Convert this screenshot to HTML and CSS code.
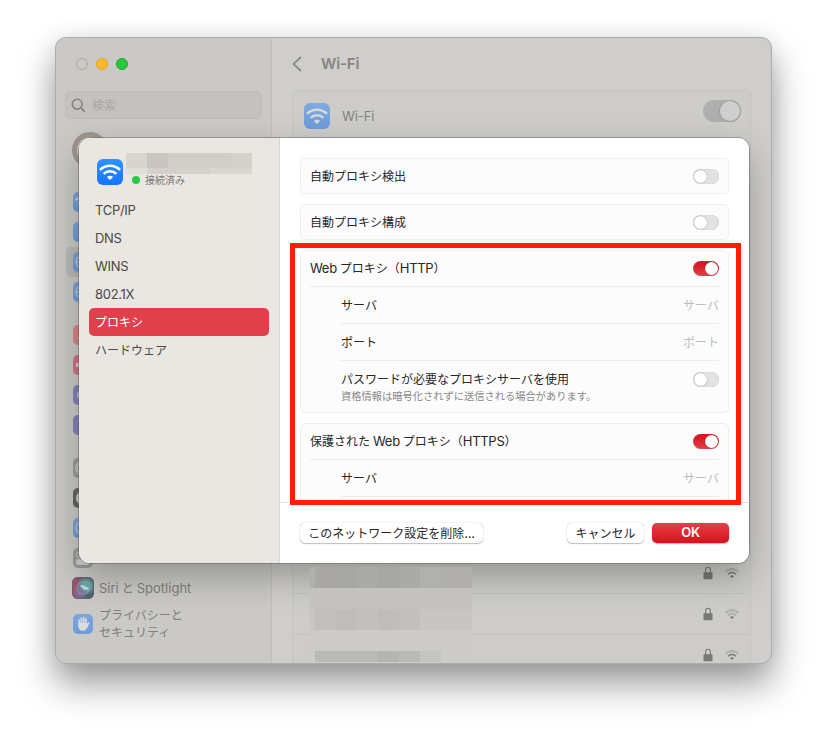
FILE: index.html
```html
<!DOCTYPE html>
<html lang="ja">
<head>
<meta charset="utf-8">
<title>Wi-Fi</title>
<link rel="stylesheet" href="styles.css">
</head>
<body>
<svg class="defs" width="0" height="0">
  <defs>
    <symbol id="wifi" viewBox="0 0 26 26">
      <g fill="none" stroke="currentColor" stroke-width="2.5" stroke-linecap="butt">
        <path d="M2.9 10.9a14.3 14.3 0 0 1 20.2 0"/>
        <path d="M6.7 14.9a8.9 8.9 0 0 1 12.6 0"/>
      </g>
      <path fill="currentColor" d="M13 21l-3.1-2.9a4.4 4.4 0 0 1 6.2 0z"/>
    </symbol>
    <symbol id="lock" viewBox="0 0 10 14">
      <path d="M2.6 7V4a2.4 2.7 0 0 1 4.8 0v3" fill="none" stroke="currentColor" stroke-width="1.1"/>
      <rect x=".5" y="6.3" width="9" height="7" rx="1" fill="currentColor"/>
    </symbol>
    <symbol id="globe" viewBox="0 0 20 20">
      <g fill="none" stroke="currentColor" stroke-width="1"><circle cx="10" cy="10" r="7"/><ellipse cx="10" cy="10" rx="3.3" ry="7"/><path d="M3 10h14M4.4 6.2h11.2M4.4 13.8h11.2"/></g>
    </symbol>
  </defs>
</svg>
<div class="window">
  <aside class="sidebar">
    <div class="lights"><i></i><i class="yellow"></i><i class="green"></i></div>
    <div class="search">
      <svg width="15" height="15" viewBox="0 0 15 15"><g fill="none" stroke="#858381" stroke-width="1.6" stroke-linecap="round"><circle cx="6.2" cy="6.2" r="4.9"/><path d="M9.8 9.8l3.5 3.3"/></g></svg>
      <span>検索</span>
    </div>
    <div class="avatar"></div>
    <div class="group">
      <div class="item"><b class="icon blue"><svg viewBox="0 0 26 26"><use href="#wifi"/></svg></b></div>
      <div class="item"><b class="icon blue"><svg viewBox="0 0 20 20"><path d="M6 7l8 6-4 4V3l4 4-8 6" fill="none" stroke="currentColor"/></svg></b></div>
      <div class="item current"><b class="icon blue"><svg><use href="#globe"/></svg></b></div>
      <div class="item"><b class="icon blue"><svg><use href="#globe"/></svg></b></div>
    </div>
    <div class="group">
      <div class="item"><b class="icon red"><svg viewBox="0 0 20 20"><path d="M4 14q3-3 3-7h6q0 4 3 7z" fill="currentColor"/></svg></b></div>
      <div class="item"><b class="icon pink"><svg viewBox="0 0 20 20"><path d="M3 8h5l5-4v12l-5-4H3z" fill="currentColor"/></svg></b></div>
      <div class="item"><b class="icon purple"><svg viewBox="0 0 20 20"><circle cx="10" cy="10" r="6" fill="currentColor"/></svg></b></div>
      <div class="item"><b class="icon purple"><svg viewBox="0 0 20 20"><path d="M6 4h8v2l-4 4 4 4v2H6v-2l4-4-4-4z" fill="none" stroke="#a3a1c4"/></svg></b></div>
    </div>
    <div class="group">
      <div class="item"><b class="icon gray"><svg viewBox="0 0 20 20"><g fill="none" stroke="currentColor"><circle cx="10" cy="10" r="7" stroke-width="2" stroke-dasharray="1.2 1"/><circle cx="10" cy="10" r="5.7"/></g></svg></b></div>
      <div class="item"><b class="icon dark"><svg viewBox="0 0 20 20"><circle cx="10" cy="10" r="7" fill="currentColor"/></svg></b></div>
      <div class="item"><b class="icon blue"><svg viewBox="0 0 20 20"><circle cx="10" cy="10" r="7" fill="none" stroke="currentColor" stroke-width="1.2"/></svg></b></div>
      <div class="item"><b class="icon gray"><svg viewBox="0 0 20 20"><g fill="none" stroke="currentColor"><rect x="3.5" y="4" width="13" height="5" rx="2.5"/></g><rect x="3" y="11" width="14" height="6" rx="3" fill="currentColor"/></svg></b></div>
      <div class="item"><b class="icon siri"><svg viewBox="0 0 22 22"><circle cx="11" cy="11" r="6.8" fill="none" stroke="#8fb0b4" stroke-width="1" opacity=".7"/><path d="M7.5 9q4-2 6.200.5 3.500.5 3.500 3.500-3.500-.5-5.200 0-1.500-3-4.500-4z" fill="#d5e2e5" opacity=".9"/></svg></b><span class="mixed"><em>Siri</em><span class="gap">と</span><em>Spotlight</em></span></div>
      <div class="item tall"><b class="icon blue"><svg viewBox="0 0 20 20"><g fill="none" stroke="#dbdcdc" stroke-width="1.7" stroke-linecap="round"><path d="M6.2 6v6M8.4 4.2V11M10.7 3.7V11M13 5v7"/><path d="M15.5 9.2l-2 4"/></g><path d="M5.4 9h8.4l.9 2.5q-1.3 5.3-4.7 5.3-4.6 0-4.6-5z" fill="#dbdcdc"/></svg></b><span>プライバシーと<br>セキュリティ</span></div>
    </div>
    <div class="group last"><div class="item"><b class="icon dark"></b></div></div>
  </aside>
  <main class="pane">
    <header class="title"><svg width="10" height="16" viewBox="0 0 10 16"><path d="M8.5 1.5L1.5 8l7 6.5" fill="none" stroke="#8b8b89" stroke-width="1.8" stroke-linecap="round" stroke-linejoin="round"/></svg><h1>Wi-Fi</h1></header>
    <section class="panel">
      <div class="panel-head"><b class="wifi-tile dim"><svg><use href="#wifi"/></svg></b><span>Wi-Fi</span><i class="big-switch"></i></div>
      <div class="net"><svg class="lock"><use href="#lock"/></svg><svg class="bars" viewBox="0 0 26 26"><use href="#wifi"/><path class="faint" d="M2.9 10.9a14.3 14.3 0 0 1 20.2 0"/></svg></div>
      <div class="net"><svg class="lock"><use href="#lock"/></svg><svg class="bars" viewBox="0 0 26 26"><use href="#wifi"/><path class="faint" d="M2.9 10.9a14.3 14.3 0 0 1 20.2 0M6.7 14.9a8.9 8.9 0 0 1 12.6 0"/></svg></div>
      <div class="net"><svg class="lock"><use href="#lock"/></svg><svg class="bars" viewBox="0 0 26 26"><use href="#wifi"/><path class="faint" d="M2.9 10.9a14.3 14.3 0 0 1 20.2 0"/></svg></div>
    </section>
  </main>
  <div class="modal-shade"></div>
  <svg class="mosaic" width="162" height="95" shape-rendering="crispEdges">
    <path fill="#b0b0ae" d="M0 0h162v21H0z"/><path fill="#a9a8a4" d="M5 0h21v21H5z"/><path fill="#a7a7a6" d="M26 0h21v21H26zM68 0h21v21H68z"/><path fill="#aaaaa9" d="M47 0h21v21H47zM89 0h21v21H89z"/><path fill="#b0afab" d="M131 0h31v21h-31z"/>
    <path fill="#c3c2be" d="M0 21h162v21H0z"/><path fill="#c7c6c3" d="M0 42h162v21H0z"/><path fill="#c1c0bc" d="M5 42h105v21H5z"/><path fill="#bebdbb" d="M26 42h21v21H26zM68 42h21v21H68z"/>
    <path fill="#cccbc8" d="M0 63h162v21H0z"/><path fill="#b9b9b7" d="M5 84h105v11H5z"/><path fill="#b4b4b2" d="M68 84h21v11H68z"/><path fill="#c4c4c3" d="M110 84h21v11h-21z"/>
  </svg>
</div>

<div class="modal">
  <nav class="tabs">
    <div class="network">
      <b class="wifi-tile"><svg><use href="#wifi"/></svg></b>
      <div class="network-info">
        <svg width="126" height="21" shape-rendering="crispEdges"><path fill="#d1cdc9" d="M0 0h126v15H0z"/><path fill="#d8d4d0" d="M0 0h21v15H0z"/><path fill="#cbc5c2" d="M21 0h21v15H21z"/><path fill="#d4d0cb" d="M105 0h21v15h-21z"/><path fill="#e1ddd8" d="M0 15h126v6H0z"/><path fill="#d4d0cc" d="M21 15h63v6H21z"/><path fill="#d9d5d0" d="M84 15h42v6H84z"/></svg>
        <p><i></i>接続済み</p>
      </div>
    </div>
    <a class="latin">TCP/IP</a>
    <a class="latin">DNS</a>
    <a class="latin">WINS</a>
    <a class="latin">802.1X</a>
    <a class="active">プロキシ</a>
    <a>ハードウェア</a>
  </nav>
  <div class="content">
    <div class="scroll">
      <section class="card"><div class="row"><span>自動プロキシ検出</span><i class="switch"></i></div></section>
      <section class="card"><div class="row"><span>自動プロキシ構成</span><i class="switch"></i></div></section>
      <section class="card">
        <div class="row"><span class="mixed"><em>Web</em><span class="gap">プロキシ（</span><em>HTTP</em>）</span><i class="switch on"></i></div>
        <div class="row sub top"><span>サーバ</span><u>サーバ</u></div>
        <div class="row sub"><span>ポート</span><u>ポート</u></div>
        <div class="row sub note"><span>パスワードが必要なプロキシサーバを使用<small>資格情報は暗号化されずに送信される場合があります。</small></span><i class="switch"></i></div>
      </section>
      <section class="card">
        <div class="row"><span class="mixed">保護された<em class="gap">Web</em>プロキシ（<em>HTTPS</em>）</span><i class="switch on"></i></div>
        <div class="row sub top"><span>サーバ</span><u>サーバ</u></div>
        <div class="row sub"></div>
      </section>
    </div>
    <footer><button class="remove">このネットワーク設定を削除<em>...</em></button><button class="cancel">キャンセル</button><button class="ok">OK</button></footer>
  </div>
</div>
<div class="highlight"></div>
</body>
</html>
```

FILE: styles.css
```css
* { box-sizing: border-box; }
body {
  margin: 0;
  width: 827px;
  height: 737px;
  overflow: hidden;
  position: relative;
  background: #fff;
  font: 12px/16px "Noto Sans CJK JP", Inter, sans-serif;
  text-autospace: no-autospace;
  color: #272727;
}
em, .latin { font: 13px/16px Inter, sans-serif; letter-spacing: -.3px; }
svg { display: block; flex: none; }
.defs { position: absolute; }

.window {
  position: relative;
  width: 717px;
  height: 627px;
  margin: 37px 0 0 55px;
  border: 1px solid #acacaa;
  border-radius: 11px;
  overflow: hidden;
  display: grid;
  grid-template-columns: 216px 1fr;
  background: #cfcecc;
  box-shadow: 0 20px 36px rgba(0, 0, 0, .4), 0 0 22px rgba(0, 0, 0, .07);
}
.sidebar {
  height: 625px;
  overflow: hidden;
  background: #cac9c5;
  border-right: 1px solid #bfbebb;
  padding: 20px 9px 0;
  color: #7f7e7c;
}
.lights { display: flex; gap: 8px; padding-left: 11px; height: 12px; }
.lights i { width: 12px; height: 12px; border-radius: 50%; background: #cbc8c3; border: 1px solid #aaa7a3; }
.lights .yellow { background: #ffb92c; border-color: #e7a01c; }
.lights .green { background: #27c83f; border-color: #18ab2b; }
.search {
  display: flex;
  align-items: center;
  gap: 6px;
  height: 28px;
  width: 197px;
  margin-top: 21px;
  padding-left: 5px;
  border: 1px solid #bfbcba;
  border-radius: 6px;
  background: #c5c1bf;
  color: #aaa7a5;
}
.avatar { width: 36px; height: 36px; margin: 13px 0 19px 7px; border-radius: 50%; background: #cecdca; border: 5px solid #9e958d; }
.group { margin-bottom: 13px; }
.item { display: flex; align-items: center; gap: 6px; height: 30px; padding-left: 8px; border-radius: 5px; white-space: nowrap; }
.item.current { background: #bbb9b7; margin-left: 1px; padding-left: 7px; }
.item.tall { height: 42px; line-height: 17px; }
.item.tall span { margin-top: -2px; }
.item em { color: #7f7e7c; letter-spacing: 0; }
.icon { width: 20px; height: 20px; border-radius: 5px; flex: none; color: #d0d0cf; background: #999; overflow: hidden; }
.icon svg { width: 20px; height: 20px; }
.icon.blue { background: linear-gradient(#7da6d9, #6e9bda); }
.icon.red { background: #dc8383; }
.icon.pink { background: #d77189; }
.icon.purple { background: #8582bd; }
.icon.gray { background: #9c9c9c; }
.icon.dark { background: #666665; }
.icon.siri {
  width: 22px;
  height: 22px;
  margin: 0 -1px;
  border: 1px solid #666673;
  background: radial-gradient(circle at 35% 75%, #8376a8, transparent 40%), radial-gradient(circle at 65% 40%, #6aa9a9 0 25%, transparent 55%), linear-gradient(100deg, #b0506e, #52606e 80%);
}
.group.last .icon { margin-top: 1px; }

.pane { padding: 17px 20px 0; height: 625px; overflow: hidden; color: #82817f; }
.title { display: flex; align-items: center; height: 18px; gap: 19px; }
h1 { font: 600 15px/18px Inter, sans-serif; margin: 0; color: #858583; letter-spacing: -.15px; }
.panel { margin-top: 17px; width: 459px; height: 600px; border: 1px solid #c5c4c1; border-radius: 6px; background: #cdccc8; }
.panel-head { display: flex; height: 462px; align-items: flex-start; padding: 12px 10px 0 11px; }
.panel-head span { font: 13px/16px Inter, sans-serif; margin: 5px 0 0 12px; letter-spacing: -.1px; }
.wifi-tile { width: 26px; height: 26px; border-radius: 6px; background: linear-gradient(#2e92ff, #1675fb); color: #fff; flex: none; }
.wifi-tile.dim { background: linear-gradient(#7eabdf, #6d9bdb); color: #d6d8d8; }
.wifi-tile svg { width: 26px; height: 26px; }
.big-switch { width: 38px; height: 22px; margin: -3px -1px 0 auto; border-radius: 11px; background: #afafaf; padding: 1px; }
.big-switch::after { content: ""; display: block; width: 20px; height: 20px; margin-left: auto; border-radius: 50%; background: #cfcfcf; box-shadow: 0 0 1px 1px #a0a0a0; }
.net { height: 41px; border-bottom: 1px solid #c2c1bd; display: flex; justify-content: flex-end; align-items: center; gap: 11px; padding-right: 10px; color: #777775; }
.lock { width: 10px; height: 14px; }
.bars { width: 16px; height: 16px; }
.faint { fill: none; stroke: #b7b6b3; stroke-width: 2.7; }
.modal-shade { position: absolute; left: 23px; top: 100px; width: 670px; height: 425px; border-radius: 11px; outline: 1px solid rgba(90, 90, 90, .45); box-shadow: 0 14px 34px rgba(0, 0, 0, .27); }
.mosaic { position: absolute; left: 254px; top: 529px; }

.modal {
  position: absolute;
  left: 79px;
  top: 138px;
  width: 670px;
  height: 425px;
  border-radius: 11px;
  overflow: hidden;
  display: grid;
  grid-template-columns: 201px 1fr;
  background: #fff;
}
.tabs { background: #eae7e2; border-right: 1px solid #d9d7d4; padding: 15px 10px; color: #494846; }
.network { display: flex; height: 43px; padding: 6px 0 0 8px; gap: 3px; }
.network-info { margin-top: -6px; }
.network p { display: flex; align-items: center; margin: 0; padding-left: 6px; height: 12px; font-size: 10px; color: #7b7976; }
.network p i { width: 8px; height: 8px; margin-right: 5px; border-radius: 50%; background: #28cb41; }
.tabs a { display: flex; align-items: center; height: 28px; padding-left: 6px; border-radius: 5px; }
.tabs .active { background: #e0404c; color: #fff; }
.content { display: flex; flex-direction: column; height: 425px; }
.scroll { height: 365px; overflow: hidden; padding: 20px 20px 0; border-bottom: 1px solid #e1e1e1; }
.card { border: 1px solid #eee; border-radius: 5px; background: #fcfcfc; margin-bottom: 10px; padding: 0 9px; }
.row { display: flex; justify-content: space-between; align-items: center; height: 34px; white-space: nowrap; }
.row > span { display: block; }
.row:not(:only-child):first-child { height: 35px; }
.row > .mixed { margin-top: -1px; }
.mixed .gap { margin: 0 3px; }
.row .mixed > span.gap { margin-right: 0; }
.row.sub { height: 37px; margin-left: 31px; border-top: 1px solid #ececec; }
.row.sub.top { margin-left: 0; padding-left: 31px; }
.row.note { height: 52px; align-items: flex-start; padding-top: 10px; }
.row.note .switch { margin-top: 1px; }
small { display: block; font-size: 10.25px; line-height: 16px; margin-top: 1px; color: #888; }
u { text-decoration: none; color: #bdbdbd; }
.switch { width: 26px; height: 15px; border-radius: 8px; background: #e2e2e2; padding: 1px; flex: none; box-shadow: inset 0 0 1px #aaa; }
.switch::after { content: ""; display: block; width: 13px; height: 13px; border-radius: 50%; background: #fff; box-shadow: 0 0 1px 0 #777; }
.switch.on { background: linear-gradient(#d60f1a, #e13f48); }
.switch.on::after { margin-left: auto; box-shadow: 0 0 1px #a00; }
footer { display: flex; height: 60px; align-items: center; padding: 0 20px 1px; }
button { border: 0; height: 20px; padding: 0; border-radius: 5px; font: inherit; line-height: 18px; background: #fff; color: #272727; box-shadow: 0 0 1px 0 #999, 0 1px 1px #c4c4c4; white-space: nowrap; }
.remove { width: 183px; margin-right: auto; }
.cancel { width: 77px; margin-right: 8px; }
.ok { width: 77px; background: linear-gradient(#e3404a, #d9111c); color: #fff; font: 600 13px/19px Inter, sans-serif; letter-spacing: -.2px; }
.highlight { position: absolute; left: 290px; top: 243px; width: 451px; height: 262px; border: 5px solid #ff1e00; }
```
